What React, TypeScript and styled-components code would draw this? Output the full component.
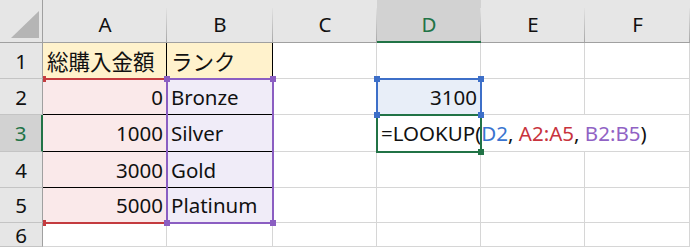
import styled, { createGlobalStyle } from "styled-components";

const GlobalStyle = createGlobalStyle`
  *, *::before, *::after { box-sizing: border-box; }
  html, body { margin: 0; padding: 0; background: #fff; overflow: hidden; }
  body { font-family: "Noto Sans", "Noto Sans CJK JP", sans-serif; }
`;

const COLS = "43px 124px 106px 104px 104px 104px 105px";
const ROWS = "43px 36px 36px 37px 36px 35px 24px";

const GREEN = "#217346";
const GRID = "#d6d6d6";
const INK = "#111";

const Frame = styled.div`
  position: relative;
  width: 690px;
  height: 247px;
  overflow: hidden;
`;

const Sheet = styled.div`
  display: grid;
  grid-template-columns: ${COLS};
  grid-template-rows: ${ROWS};
  width: 690px;
  height: 247px;
  font-size: 20.5px;
  color: ${INK};
`;

// selection / reference boxes sit on a second grid laid over the cells
const Overlay = styled.div`
  position: absolute;
  inset: 0;
  display: grid;
  grid-template-columns: ${COLS};
  grid-template-rows: ${ROWS};
  pointer-events: none;
  z-index: 1;
`;

const Corner = styled.div`
  position: relative;
  background: #e6e6e6;
  border-bottom: 1px solid #a0a0a0;
  border-right: 1px solid #a0a0a0;
  svg { position: absolute; left: 0; top: 0; }
`;

const ColHead = styled.div<{ $active?: boolean }>`
  position: relative;
  display: flex;
  align-items: center;
  justify-content: center;
  padding-top: 6px;
  background: ${(p) => (p.$active ? "#d2d2d2" : "#e6e6e6")};
  border-bottom: ${(p) => (p.$active ? `2px solid ${GREEN}` : "1px solid #a0a0a0")};
  color: ${(p) => (p.$active ? GREEN : INK)};
  &::after {
    content: "";
    position: absolute;
    right: 0;
    top: 8px;
    bottom: 0;
    width: 1px;
    background: linear-gradient(#e2e2e2, #a8a8a8);
  }
`;

const RowHead = styled.div<{ $active?: boolean }>`
  display: flex;
  align-items: center;
  justify-content: center;
  background: ${(p) => (p.$active ? "#d2d2d2" : "#e6e6e6")};
  border-right: ${(p) => (p.$active ? `2px solid ${GREEN}` : "1px solid #a0a0a0")};
  border-bottom: 1px solid #c4c4c4;
  color: ${(p) => (p.$active ? GREEN : INK)};
`;

const Cell = styled.div<{
  $fill?: string;
  $right?: boolean;
  $lineB?: string;
  $lineR?: string;
  $jp?: boolean;
}>`
  display: flex;
  align-items: center;
  justify-content: ${(p) => (p.$right ? "flex-end" : "flex-start")};
  padding: 0 3px 0 4px;
  background: ${(p) => p.$fill ?? "#fff"};
  border-right: 1px solid ${(p) => p.$lineR ?? GRID};
  border-bottom: 1px solid ${(p) => p.$lineB ?? GRID};
  white-space: pre;
  font-size: ${(p) => (p.$jp ? "21.5px" : "inherit")};
`;

const FormulaCell = styled(Cell)`
  grid-column: span 3;
`;

const Ref = styled.span<{ $color: string }>`
  color: ${(p) => p.$color};
`;

const RangeBox = styled.div<{ $color: string; $col: string; $row: string; $openLeft?: boolean }>`
  position: relative;
  grid-column: ${(p) => p.$col};
  grid-row: ${(p) => p.$row};
  margin: -1px;
  margin-left: ${(p) => (p.$openLeft ? "0" : "-1px")};
  border: 2px solid ${(p) => p.$color};
  border-left-width: ${(p) => (p.$openLeft ? "0" : "2px")};
`;

const Handle = styled.span<{ $color: string; $x: "left" | "right"; $y: "top" | "bottom" }>`
  position: absolute;
  ${(p) => p.$x}: -4px;
  ${(p) => p.$y}: -4px;
  width: 6px;
  height: 6px;
  background: ${(p) => p.$color};
  z-index: 2;
`;

const StubHandle = styled(Handle)`
  left: 0;
  width: 3px;
`;

const RED = "#c43b3f";
const PURPLE = "#8b5ec2";
const BLUE = "#3d6fc8";

const PINK = "#fae9ea";
const LILAC = "#f0ecf8";
const CREAM = "#fff2cc";
const ICE = "#e8eef8";

const columns = ["A", "B", "C", "D", "E", "F"];

const table = [
  { n: "0", rank: "Bronze" },
  { n: "1000", rank: "Silver" },
  { n: "3000", rank: "Gold" },
  { n: "5000", rank: "Platinum" },
];

function Corners({ color }: { color: string }) {
  return (
    <>
      <Handle $color={color} $x="left" $y="top" />
      <Handle $color={color} $x="right" $y="top" />
      <Handle $color={color} $x="left" $y="bottom" />
      <Handle $color={color} $x="right" $y="bottom" />
    </>
  );
}

export default function App() {
  return (
    <Frame>
      <GlobalStyle />
      <Sheet>
        <Corner>
          <svg width="43" height="43" viewBox="0 0 43 43">
            <polygon points="11,38 39,11 39,38" fill="#b5b5b5" />
          </svg>
        </Corner>
        {columns.map((c) => (
          <ColHead key={c} $active={c === "D"}>
            {c}
          </ColHead>
        ))}

        <RowHead>1</RowHead>
        <Cell $fill={CREAM} $lineR="#000" $jp>
          総購入金額
        </Cell>
        <Cell $fill={CREAM} $lineR="#000" $jp>
          ランク
        </Cell>
        <Cell />
        <Cell />
        <Cell />
        <Cell />

        {table.map((r, i) => (
          <Row key={r.n} index={i} n={r.n} rank={r.rank} />
        ))}

        <RowHead>6</RowHead>
        <Cell />
        <Cell />
        <Cell />
        <Cell />
        <Cell />
        <Cell />
      </Sheet>

      <Overlay>
        <RangeBox $color={RED} $col="2" $row="3 / 7" $openLeft>
          <StubHandle $color={RED} $x="left" $y="top" />
          <StubHandle $color={RED} $x="left" $y="bottom" />
        </RangeBox>
        <RangeBox $color={PURPLE} $col="3" $row="3 / 7">
          <Corners color={PURPLE} />
        </RangeBox>
        <RangeBox $color={BLUE} $col="5" $row="3">
          <Corners color={BLUE} />
        </RangeBox>
        <RangeBox $color={GREEN} $col="5" $row="4">
          <Handle $color={GREEN} $x="right" $y="bottom" />
        </RangeBox>
      </Overlay>
    </Frame>
  );
}

function Row({ index, n, rank }: { index: number; n: string; rank: string }) {
  const row = index + 2;
  const line = index < 3 ? "#000" : GRID;
  return (
    <>
      <RowHead $active={row === 3}>{row}</RowHead>
      <Cell $fill={PINK} $right $lineB={line}>
        {n}
      </Cell>
      <Cell $fill={LILAC} $lineB={line}>
        {rank}
      </Cell>
      <Cell />
      {row === 2 && (
        <>
          <Cell $fill={ICE} $right>
            3100
          </Cell>
          <Cell />
          <Cell />
        </>
      )}
      {row === 3 && (
        <FormulaCell>
          <span>
            =LOOKUP(<Ref $color="#3a74cf">D2</Ref>, <Ref $color="#c8333d">A2:A5</Ref>,{" "}
            <Ref $color="#9062c4">B2:B5</Ref>)
          </span>
        </FormulaCell>
      )}
      {row > 3 && (
        <>
          <Cell />
          <Cell />
          <Cell />
        </>
      )}
    </>
  );
}
